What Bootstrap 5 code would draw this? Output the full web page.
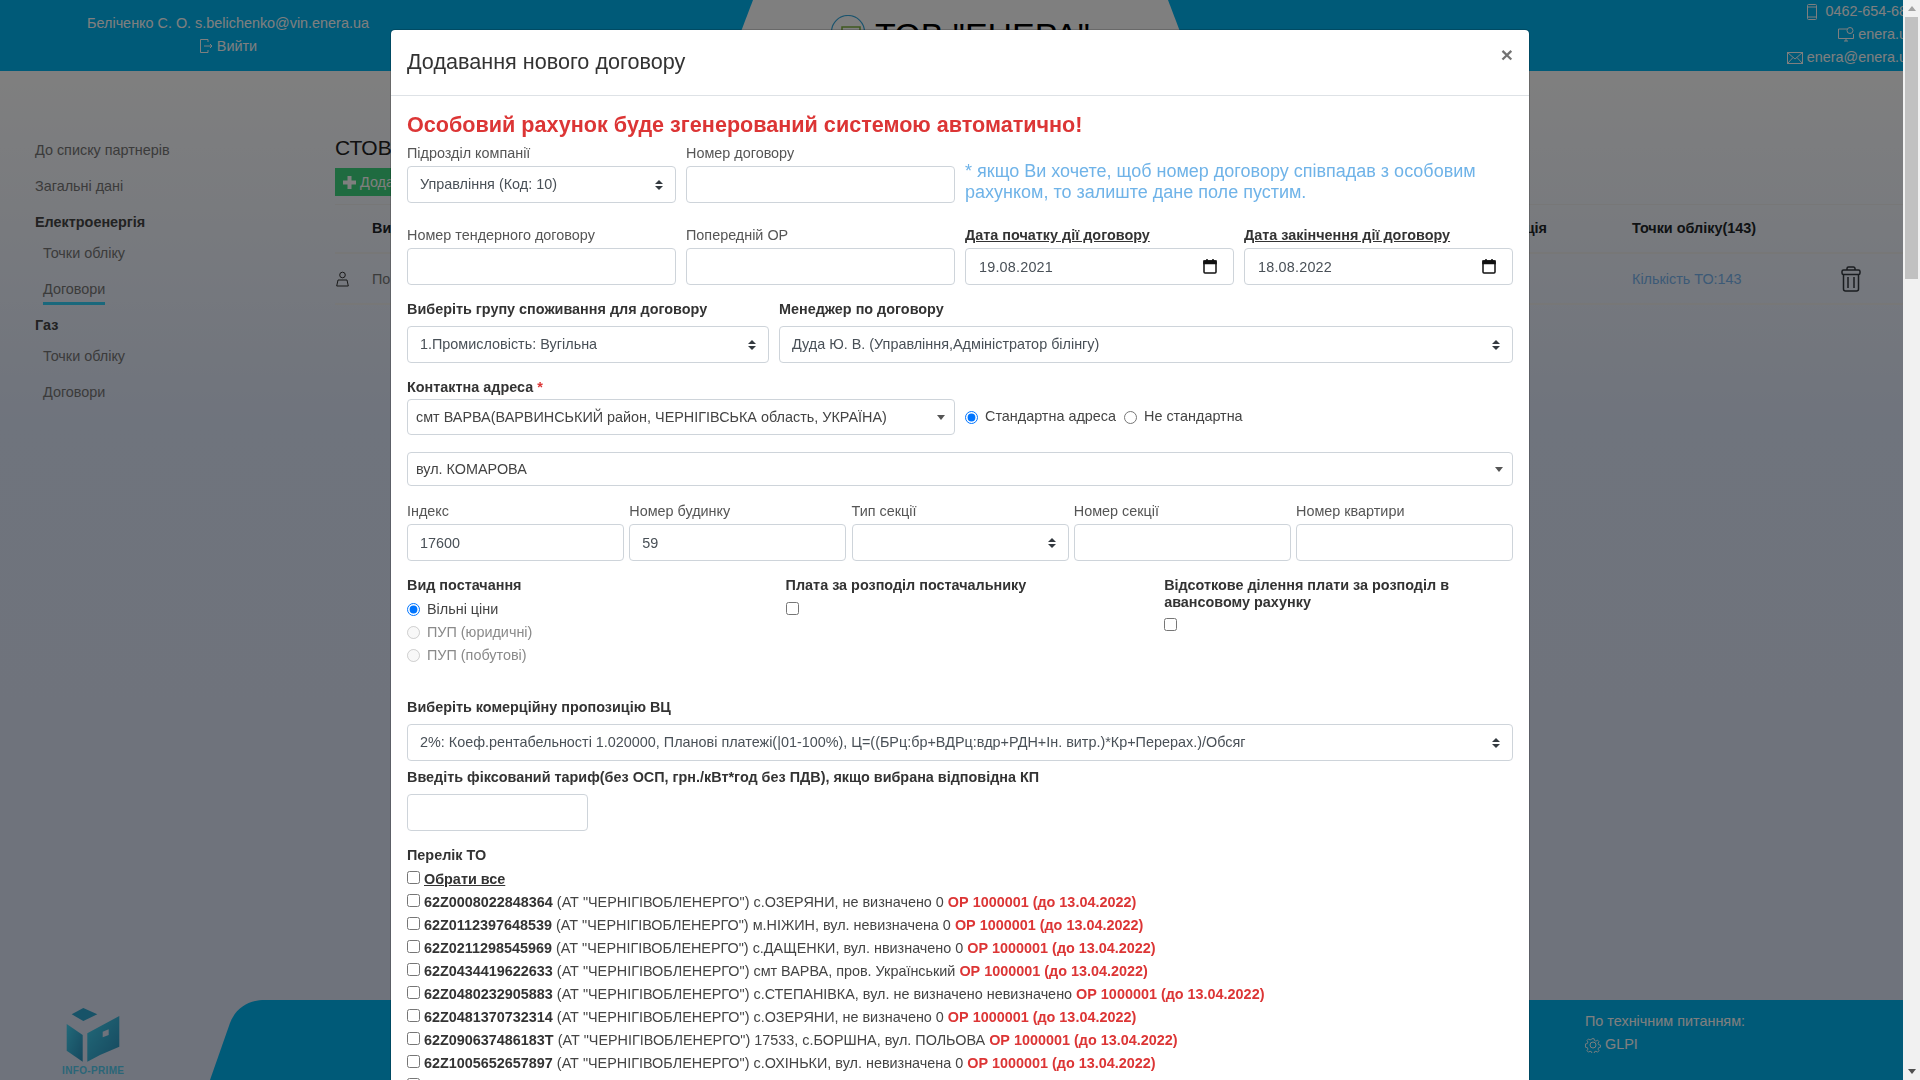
<!DOCTYPE html>
<html lang="uk">
<head>
<meta charset="utf-8">
<title>Додавання нового договору</title>
<link href="https://cdn.jsdelivr.net/npm/bootstrap@5.3.0/dist/css/bootstrap.min.css" rel="stylesheet">
<style>
html,body{height:100%;overflow:hidden}
body{font-family:"Liberation Sans",Arial,sans-serif;font-size:14.4px;color:#444;background:#fff}
.shell{height:100vh}
.pagewrap{width:1903px;height:100vh;overflow:hidden;flex:none}
.topbar{height:71px;background:#00b4f0;color:#fff;flex:none}
.whoami{width:456px;padding-top:11.5px;line-height:23px;flex:none}
.brandbox{width:469px;height:71px;margin-left:270px;background:#fff;clip-path:polygon(27px 0,442px 0,469px 71px,0 71px);padding-top:15px;padding-left:105px;flex:none;color:#000;font-size:34px;line-height:40px;white-space:nowrap}
.contacts{margin-left:auto;margin-right:-12px;line-height:23px;white-space:nowrap;flex:none}
.midzone{background:linear-gradient(#fff,#dfe8fa 350px,#dfe6f8);min-height:0}
.sidezone{width:335px;padding:68px 0 0 35px;flex:none;color:#777}
.sitem{line-height:22px;margin-bottom:14px}
.ssub{padding-left:8px}
.sbold{font-weight:700;color:#444;margin-bottom:9px}
.sactive{display:inline-block;border-bottom:3px solid #35d0f8;padding-bottom:2px;margin-bottom:9px}
.sactivewrap{margin-bottom:0}
.mainzone{padding-top:63px;min-width:0}
.pagetitle{font-size:21px;line-height:28px;color:#222}
.addbtn{background:#3ed680;color:#fff;height:28px;width:130px;margin-top:6px;padding:0 8px;border-radius:0;border:0;font-size:14.4px;line-height:28px;white-space:nowrap}
.tblhead{height:50px;margin-top:8px;border-top:1px solid #eee;border-bottom:2px solid #eee;color:#212529;font-weight:700}
.tblrow{height:51px;padding-top:1px;border-bottom:2px solid #eee;color:#777}
.cicon{width:37px;flex:none;padding-left:1px}
.ctext{padding-top:2px}
.cpoints{width:190px;flex:none}
.ctrash{width:58px;flex:none;text-align:center;margin-right:23px}
.copt{margin-right:85px}
.tolink{color:#78b4ee;text-decoration:none}
.footbar{height:80px;flex:none}
.logozone{width:210px;padding:8px 0 0 62px;background:#dfe6f8;flex:none}
.logotext{font-size:10px;font-weight:700;line-height:11px;color:#55cdf0;letter-spacing:.35px;white-space:nowrap}
.cornerbox{width:55px;background:#dfe6f8;flex:none}
.footfill{background:#00b4f0;color:#fff;padding:10px 0 0 1320px;line-height:23px}
.modal.shownow{display:block;overflow:hidden}
.modal-dialog.dlgtop{margin:29px auto 0}
.modal-content.dlgbox{border-radius:5px;min-height:1200px}
.modal-header.dlghead{height:66px;padding:16px;align-items:flex-start;border-bottom:1px solid #dee2e6}
.dlgtitle{font-size:21.6px;line-height:32px;font-weight:400;color:#333;margin:0}
.dlgclose{background:none;border:0;padding:0;font-size:21px;font-weight:700;line-height:18px;color:#000;opacity:.55;margin-top:0}
.modal-body.dlgbody{padding:16px}
.bigwarn{font-size:21.6px;font-weight:700;line-height:26px;color:#dc3535;margin-bottom:5px}
.gutx{--bs-gutter-x:10px}
.flab{display:block;line-height:21px;margin-bottom:2px;color:#555;white-space:nowrap}
.boldlab{font-weight:700;color:#333}
.ulab{text-decoration:underline}
.lab6{margin-bottom:6px}
.lab1{margin-bottom:1px}
.star{color:#dc3535}
.form-control.ff,.form-select.ff{height:37px;font-size:14.4px;color:#495057;border-radius:4px;padding:6px 12px;border-color:#ced4da}
.form-select.dbl{background-image:url("data:image/svg+xml,%3csvg xmlns='http://www.w3.org/2000/svg' viewBox='0 0 4 5'%3e%3cpath fill='%23343a40' d='M2 0L0 2h4zm0 5L0 3h4z'/%3e%3c/svg%3e");background-size:8px 10px;background-position:right 12px center}
.form-select.tri{background-image:url("data:image/svg+xml,%3csvg xmlns='http://www.w3.org/2000/svg' viewBox='0 0 8 5'%3e%3cpath fill='%23555' d='M0 0h8L4 5z'/%3e%3c/svg%3e");background-size:8px 5px;background-position:right 9px center;padding-left:8px;color:#444}
.form-select.ff.h36{height:36px;padding-top:7px;padding-bottom:5px}
.h34{height:34px!important}
.note{font-size:18px;line-height:21px;color:#6fb3e8;padding-top:18px}
.datewrap{position:relative}
.datewrap .form-control{letter-spacing:.2px;padding-left:13px}
.calico{position:absolute;right:17px;top:11px;pointer-events:none}
.mt14{margin-top:14px}
.mt15{margin-top:15px}
.mt17{margin-top:17px}
.mt22{margin-top:22px}
.mt30{margin-top:30px}
.mt6{margin-top:6px}
.fiverow{gap:5.25px}
.fiverow>div{width:217px;flex:none}
.tick.form-check-input{appearance:auto;-webkit-appearance:auto;width:13px;height:13px;margin:0;flex:none;background-image:none;border:0;opacity:1;float:none}
.tick.form-check-input:focus{box-shadow:none}
.radline{height:23px;color:#444}
.radline.tall{height:36px}
.radline .tick{margin-right:7px}
.radline.dis{color:#8a8a8a}
.radline .radgap{margin-left:8px}
.vcol{width:378.6px;flex:none}
.vlast{width:349px;flex:none;padding-top:2px}
.tightlab{display:block;line-height:17px;font-weight:700;color:#333}
.vcol .boxa{margin-top:6px}
.vlast .boxb{margin-top:7px}
.kpinput{width:181px}
.perelik{margin-bottom:1.5px}
.toline{height:23px;white-space:nowrap;color:#444}
.toline .tick{margin:0 4px 3px 0}
.toline>span{padding-top:2px}
.toline b{color:#333}
.toline .opred{color:#dc3535;font-weight:700}
.selall{font-weight:700;color:#333;text-decoration:underline}
.modal-backdrop.back50{opacity:.5}
.scrollrail{width:17px;height:100vh;background:#f1f1f1;position:relative;z-index:2000;flex:none}
.arrowcell{height:17px}
.thumbbar{width:13px;height:262px;margin-left:2px;background:#c1c1c1}
.nowr{white-space:nowrap}
</style>
</head>
<body>
<div class="shell d-flex">
  <div class="pagewrap d-flex flex-column">
    <header class="topbar d-flex">
      <div class="whoami text-center">
        <div>Беліченко С. О. s.belichenko@vin.enera.ua</div>
        <div class="d-flex justify-content-center align-items-center gap-1">
          <svg width="14" height="16" viewBox="0 0 14 16" fill="none" stroke="#fff" stroke-width="1"><path d="M9 4V1.500H1.500v13H9V12"/><path d="M5 8h8M11 6l2 2-2 2"/></svg>
          <span>Вийти</span>
        </div>
      </div>
      <div class="brandbox d-flex">
        <svg width="40" height="40" viewBox="0 0 40 40" fill="none"><circle cx="17" cy="17" r="16.500" stroke="#36a8dc" stroke-width="1.200"/><path d="M11 12h18v14H11z" stroke="#7fb23f" stroke-width="1.500"/></svg>
        <span class="ms-1">ТОВ "ЕНЕРА"</span>
      </div>
      <div class="contacts text-end">
        <div class="d-flex justify-content-end align-items-center gap-2">
          <svg width="10" height="16" viewBox="0 0 10 16" fill="none" stroke="#fff" stroke-width="1"><rect x=".5" y=".5" width="9" height="15" rx="1"/><path d="M.5 3h9M.5 13h9"/></svg>
          <span>0462-654-688</span>
        </div>
        <div class="d-flex justify-content-end align-items-center gap-1">
          <svg width="16" height="16" viewBox="0 0 16 16" fill="none" stroke="#fff" stroke-width="1"><path d="M9 2H.5v9.500h15V7"/><path d="M6 14h4M8 11v3"/><circle cx="12" cy="3.500" r="3"/></svg>
          <span>enera.ua</span>
        </div>
        <div class="d-flex justify-content-end align-items-center gap-1">
          <svg width="16" height="12" viewBox="0 0 16 12" fill="none" stroke="#fff" stroke-width="1"><rect x=".5" y=".5" width="15" height="11"/><path d="M.5.500 8 7l7.500-6.500M.5 11.500 6 5.500M15.500 11.500 10 5.500"/></svg>
          <span>enera@enera.ua</span>
        </div>
      </div>
    </header>

    <div class="midzone d-flex flex-grow-1">
      <nav class="sidezone">
        <div class="sitem">До списку партнерів</div>
        <div class="sitem">Загальні дані</div>
        <div class="sitem sbold">Електроенергія</div>
        <div class="sitem ssub">Точки обліку</div>
        <div class="sitem ssub sactivewrap"><span class="sactive">Договори</span></div>
        <div class="sitem sbold">Газ</div>
        <div class="sitem ssub">Точки обліку</div>
        <div class="sitem ssub">Договори</div>
      </nav>
      <main class="mainzone flex-grow-1">
        <div class="pagetitle">СТОВ</div>
        <button class="btn addbtn d-flex align-items-center gap-1" type="button">
          <svg width="13" height="13" viewBox="0 0 13 13"><path fill="#fff" d="M4.500 0h4v4.500H13v4H8.500V13h-4V8.500H0v-4h4.500z"/></svg>
          <span>Додати</span>
        </button>
        <div class="tblhead d-flex align-items-center">
          <div class="cicon"></div>
          <div class="flex-grow-1">Вид</div>
          <div class="copt">Опція</div>
          <div class="cpoints">Точки обліку(143)</div>
          <div class="ctrash"></div>
        </div>
        <div class="tblrow d-flex align-items-center">
          <div class="cicon"><svg width="13" height="16" viewBox="0 0 13 16" fill="none" stroke="#333" stroke-width="1"><circle cx="6.500" cy="4" r="2.800"/><path d="M.7 15l1.300-6h9l1.300 6z"/></svg></div>
          <div class="flex-grow-1 ctext">По</div>
          <div class="cpoints ctext"><a class="tolink" href="#">Кількість ТО:143</a></div>
          <div class="ctrash"><svg width="20" height="26" viewBox="0 0 20 26" fill="none" stroke="#343a40" stroke-width="1.500"><path d="M6 4V2.500A1.500 1.500 0 0 1 7.500 1h5A1.500 1.500 0 0 1 14 2.500V4"/><rect x="1" y="4" width="18" height="4.500" rx="1.500"/><path d="M2.500 8.500V23a2 2 0 0 0 2 2h11a2 2 0 0 0 2-2V8.500"/><path d="M7 11v11M13 11v11"/></svg></div>
        </div>
      </main>
    </div>

    <footer class="footbar d-flex">
      <div class="logozone">
        <svg class="d-block" width="60" height="57" viewBox="0 0 60 57">
          <defs><linearGradient id="lg1" x1="0" y1="0" x2="1" y2="1"><stop offset="0" stop-color="#44d4f4"/><stop offset="1" stop-color="#2c90bc"/></linearGradient></defs>
          <path fill="#2ea6d0" d="M9.700 6.300 21.300 0l14 6.300L21.300 13z"/>
          <path fill="url(#lg1)" d="M4.700 16l16 11v26.700l-16-11z"/>
          <path fill="url(#lg1)" d="M25.300 25.300 57.300 8v30.700L38 47v0l-12.700 6.700z"/>
          <path fill="#dfe6f8" d="M40.700 23.700l6-2.400V27l-6 2.300z"/>
        </svg>
        <div class="logotext">INFO-PRIME</div>
      </div>
      <div class="cornerbox"><svg class="d-block" width="55" height="80" viewBox="0 0 55 80"><path fill="#00b4f0" d="M0 80 20 23C26 8 38 0 55 0V80Z"/></svg></div>
      <div class="footfill flex-grow-1">
        <div class="nowr">По технічним питанням:</div>
        <div class="d-flex align-items-center gap-1">
          <svg width="16" height="16" viewBox="0 0 16 16" fill="none" stroke="#fff" stroke-width="1"><circle cx="8" cy="8" r="3"/><path d="M6.800 1h2.400l.4 2 1.700.7 1.700-1.100 1.700 1.700-1.100 1.700.7 1.700 2 .4v2.400l-2 .4-.7 1.700 1.100 1.700-1.700 1.700-1.700-1.100-1.700.7-.4 2H6.800l-.4-2-1.700-.7-1.700 1.100-1.700-1.700 1.100-1.700-.7-1.700-2-.4V6.800l2-.4.7-1.700-1.100-1.700 1.700-1.700 1.700 1.100 1.700-.7z" transform="translate(.8 .8) scale(.9)"/></svg>
          <span>GLPI</span>
        </div>
      </div>
    </footer>
  </div>

  <div class="modal-backdrop fade show back50"></div>

  <div class="modal shownow">
    <div class="modal-dialog modal-xl dlgtop">
      <div class="modal-content dlgbox">
        <div class="modal-header dlghead">
          <h5 class="dlgtitle">Додавання нового договору</h5>
          <button class="dlgclose" type="button" aria-label="Close">×</button>
        </div>
        <div class="modal-body dlgbody">
          <div class="bigwarn">Особовий рахунок буде згенерований системою автоматично!</div>

          <div class="row gutx">
            <div class="col-3">
              <label class="flab">Підрозділ компанії</label>
              <select class="form-select ff dbl"><option>Управління (Код: 10)</option></select>
            </div>
            <div class="col-3">
              <label class="flab">Номер договору</label>
              <input class="form-control ff" type="text">
            </div>
            <div class="col-6 note">* якщо Ви хочете, щоб номер договору співпадав з особовим рахунком, то залиште дане поле пустим.</div>
          </div>

          <div class="row gutx mt22">
            <div class="col-3">
              <label class="flab">Номер тендерного договору</label>
              <input class="form-control ff" type="text">
            </div>
            <div class="col-3">
              <label class="flab">Попередній ОР</label>
              <input class="form-control ff" type="text">
            </div>
            <div class="col-3">
              <label class="flab boldlab ulab">Дата початку дії договору</label>
              <div class="datewrap">
                <input class="form-control ff" type="text" value="19.08.2021">
                <svg class="calico" width="14" height="15" viewBox="0 0 14 15" fill="none" stroke="#111" stroke-width="1.500"><rect x="1" y="2" width="12" height="12" rx="1"/><path fill="#111" d="M1 2h12v2.500H1z"/><path d="M4 0v2M10 0v2"/></svg>
              </div>
            </div>
            <div class="col-3">
              <label class="flab boldlab ulab">Дата закінчення дії договору</label>
              <div class="datewrap">
                <input class="form-control ff" type="text" value="18.08.2022">
                <svg class="calico" width="14" height="15" viewBox="0 0 14 15" fill="none" stroke="#111" stroke-width="1.500"><rect x="1" y="2" width="12" height="12" rx="1"/><path fill="#111" d="M1 2h12v2.500H1z"/><path d="M4 0v2M10 0v2"/></svg>
              </div>
            </div>
          </div>

          <div class="row gutx mt14">
            <div class="col-4">
              <label class="flab boldlab lab6">Виберіть групу споживання для договору</label>
              <select class="form-select ff dbl"><option>1.Промисловість: Вугільна</option></select>
            </div>
            <div class="col-8">
              <label class="flab boldlab lab6">Менеджер по договору</label>
              <select class="form-select ff dbl"><option>Дуда Ю. В. (Управління,Адміністратор білінгу)</option></select>
            </div>
          </div>

          <div class="mt14">
            <label class="flab boldlab lab1">Контактна адреса <span class="star">*</span></label>
            <div class="row gutx">
              <div class="col-6">
                <select class="form-select ff tri h36"><option>смт ВАРВА(ВАРВИНСЬКИЙ район, ЧЕРНІГІВСЬКА область, УКРАЇНА)</option></select>
              </div>
              <div class="col-6 d-flex align-items-center radline tall">
                <input class="form-check-input tick" type="radio" name="addr" checked>
                <span>Стандартна адреса</span>
                <input class="form-check-input tick radgap" type="radio" name="addr">
                <span>Не стандартна</span>
              </div>
            </div>
          </div>

          <div class="mt17">
            <select class="form-select ff tri h34"><option>вул. КОМАРОВА</option></select>
          </div>

          <div class="d-flex fiverow mt15">
            <div><label class="flab">Індекс</label><input class="form-control ff" type="text" value="17600"></div>
            <div><label class="flab">Номер будинку</label><input class="form-control ff" type="text" value="59"></div>
            <div><label class="flab">Тип секції</label><select class="form-select ff dbl"><option></option></select></div>
            <div><label class="flab">Номер секції</label><input class="form-control ff" type="text"></div>
            <div><label class="flab">Номер квартири</label><input class="form-control ff" type="text"></div>
          </div>

          <div class="d-flex mt14">
            <div class="vcol">
              <label class="flab boldlab">Вид постачання</label>
              <div class="d-flex align-items-center radline"><input class="form-check-input tick" type="radio" name="vid" checked><span>Вільні ціни</span></div>
              <div class="d-flex align-items-center radline dis"><input class="form-check-input tick" type="radio" name="vid" disabled><span>ПУП (юридичні)</span></div>
              <div class="d-flex align-items-center radline dis"><input class="form-check-input tick" type="radio" name="vid" disabled><span>ПУП (побутові)</span></div>
            </div>
            <div class="vcol">
              <label class="flab boldlab">Плата за розподіл постачальнику</label>
              <input class="form-check-input tick d-block boxa" type="checkbox">
            </div>
            <div class="vlast">
              <label class="tightlab">Відсоткове ділення плати за розподіл в авансовому рахунку</label>
              <input class="form-check-input tick d-block boxb" type="checkbox">
            </div>
          </div>

          <div class="mt30">
            <label class="flab boldlab lab6">Виберіть комерційну пропозицію ВЦ</label>
            <select class="form-select ff dbl"><option>2%: Коеф.рентабельності 1.020000, Планові платежі(|01-100%), Ц=((БРц:бр+ВДРц:вдр+РДН+Ін. витр.)*Кр+Перерах.)/Обсяг</option></select>
          </div>

          <div class="mt6">
            <label class="flab boldlab lab6">Введіть фіксований тариф(без ОСП, грн./кВт*год без ПДВ), якщо вибрана відповідна КП</label>
            <input class="form-control ff kpinput" type="text">
          </div>

          <div class="mt14">
            <label class="flab boldlab perelik">Перелік ТО</label>
            <div class="d-flex align-items-center toline"><input class="form-check-input tick" type="checkbox"><span class="selall">Обрати все</span></div>
            <div class="d-flex align-items-center toline"><input class="form-check-input tick" type="checkbox"><span><b>62Z0008022848364</b> (АТ "ЧЕРНІГІВОБЛЕНЕРГО") с.ОЗЕРЯНИ, не визначено 0 <span class="opred">ОР 1000001 (до 13.04.2022)</span></span></div>
            <div class="d-flex align-items-center toline"><input class="form-check-input tick" type="checkbox"><span><b>62Z0112397648539</b> (АТ "ЧЕРНІГІВОБЛЕНЕРГО") м.НІЖИН, вул. невизначена 0 <span class="opred">ОР 1000001 (до 13.04.2022)</span></span></div>
            <div class="d-flex align-items-center toline"><input class="form-check-input tick" type="checkbox"><span><b>62Z0211298545969</b> (АТ "ЧЕРНІГІВОБЛЕНЕРГО") с.ДАЩЕНКИ, вул. нвизначено 0 <span class="opred">ОР 1000001 (до 13.04.2022)</span></span></div>
            <div class="d-flex align-items-center toline"><input class="form-check-input tick" type="checkbox"><span><b>62Z0434419622633</b> (АТ "ЧЕРНІГІВОБЛЕНЕРГО") смт ВАРВА, пров. Український <span class="opred">ОР 1000001 (до 13.04.2022)</span></span></div>
            <div class="d-flex align-items-center toline"><input class="form-check-input tick" type="checkbox"><span><b>62Z0480232905883</b> (АТ "ЧЕРНІГІВОБЛЕНЕРГО") с.СТЕПАНІВКА, вул. не визначено невизначено <span class="opred">ОР 1000001 (до 13.04.2022)</span></span></div>
            <div class="d-flex align-items-center toline"><input class="form-check-input tick" type="checkbox"><span><b>62Z0481370732314</b> (АТ "ЧЕРНІГІВОБЛЕНЕРГО") с.ОЗЕРЯНИ, не визначено 0 <span class="opred">ОР 1000001 (до 13.04.2022)</span></span></div>
            <div class="d-flex align-items-center toline"><input class="form-check-input tick" type="checkbox"><span><b>62Z090637486183T</b> (АТ "ЧЕРНІГІВОБЛЕНЕРГО") 17533, с.БОРШНА, вул. ПОЛЬОВА <span class="opred">ОР 1000001 (до 13.04.2022)</span></span></div>
            <div class="d-flex align-items-center toline"><input class="form-check-input tick" type="checkbox"><span><b>62Z1005652657897</b> (АТ "ЧЕРНІГІВОБЛЕНЕРГО") с.ОХІНЬКИ, вул. невизначена 0 <span class="opred">ОР 1000001 (до 13.04.2022)</span></span></div>
            <div class="d-flex align-items-center toline"><input class="form-check-input tick" type="checkbox"></div>
          </div>
        </div>
      </div>
    </div>
  </div>

  <div class="scrollrail d-flex flex-column">
    <div class="arrowcell d-flex align-items-center justify-content-center"><svg width="8" height="5" viewBox="0 0 8 5"><path fill="#a3a3a3" d="M4 0l4 5H0z"/></svg></div>
    <div class="thumbbar"></div>
    <div class="flex-grow-1"></div>
    <div class="arrowcell d-flex align-items-center justify-content-center"><svg width="8" height="5" viewBox="0 0 8 5"><path fill="#505050" d="M0 0h8L4 5z"/></svg></div>
  </div>
</div>
<script src="https://cdn.jsdelivr.net/npm/bootstrap@5.3.0/dist/js/bootstrap.bundle.min.js"></script>
</body>
</html>
